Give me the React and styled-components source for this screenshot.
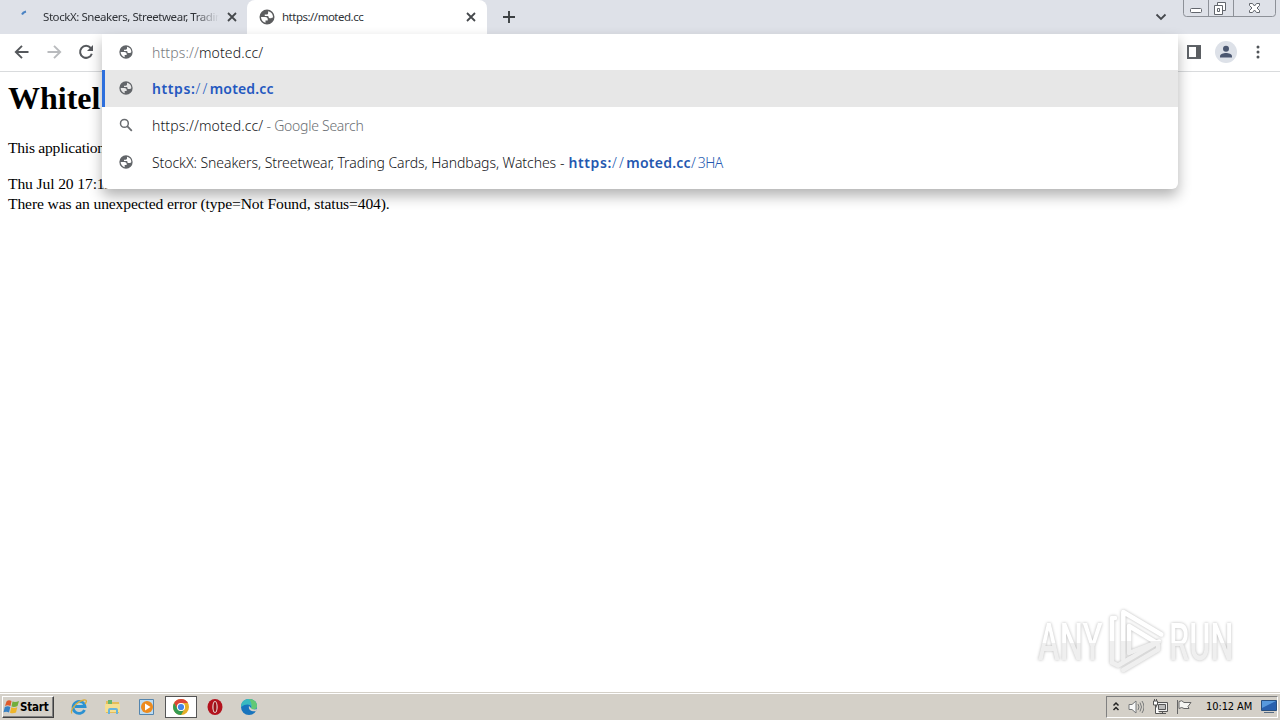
import styled, { createGlobalStyle } from "styled-components";

const suggestions = [
  {
    id: 1,
    icon: "globe",
    selected: true,
    parts: [
      { text: "https:", bold: true, space: 0.6, color: "#2458c0" },
      { text: "//", space: 2.3, color: "#2458c0" },
      { text: "moted.cc", bold: true, space: 0.15, color: "#2458c0" },
    ],
  },
  {
    id: 2,
    icon: "search",
    parts: [
      { text: "https://moted.cc/", space: 0.12 },
      { text: " - Google Search", space: -0.27, color: "#6b6f74" },
    ],
  },
  {
    id: 3,
    icon: "globe",
    parts: [
      { text: "StockX: Sneakers, Streetwear, Trading Cards, Handbags, Watches", space: -0.06 },
      { text: " - ", space: 0.2 },
      { text: "https:", bold: true, space: 0.6, color: "#2458b0" },
      { text: "//", space: 2.3, color: "#2458b0" },
      { text: "moted.cc", bold: true, space: 0.25, color: "#2458b0" },
      { text: "/", space: 2, color: "#2458b0" },
      { text: "3HA", space: -0.6, color: "#2458b0" },
    ],
  },
];

export default function App() {
  return (
    <>
      <GlobalStyle />
      <Screen>
        <TabStrip>
          <Tab $width={247}>
            <SpinnerIcon />
            <TabTitle $fade>StockX: Sneakers, Streetwear, Trading</TabTitle>
            <CloseIcon />
          </Tab>
          <Tab $width={240} $active>
            <GlobeIcon size={18} color="#5b5c5e" />
            <TabTitle $active>https://moted.cc</TabTitle>
            <CloseIcon />
          </Tab>
          <NewTab>
            <svg width="12" height="12" viewBox="0 0 12 12">
              <path d="M6 0v12M0 6h12" stroke="#3c4043" strokeWidth="1.9" />
            </svg>
          </NewTab>
          <TabSearch>
            <svg width="12" height="8" viewBox="0 0 12 8">
              <path d="M1.5 1.5 6 6l4.5-4.5" fill="none" stroke="#45484d" strokeWidth="1.8" />
            </svg>
          </TabSearch>
          <WindowButtons />
        </TabStrip>
        <Toolbar>
          <NavButtons>
            <ArrowIcon color="#55585c" />
            <ArrowIcon color="#b9bbbe" forward />
            <ReloadIcon />
          </NavButtons>
          <ToolbarActions>
            <svg width="14" height="14" viewBox="0 0 14 14">
              <path d="M1 1h12v12H1z" fill="none" stroke="#5f6368" strokeWidth="2" />
              <path d="M9 1h5v12H9z" fill="#5b5e62" />
            </svg>
            <Avatar>
              <svg width="14" height="14" viewBox="0 0 14 14" fill="#4b5770">
                <circle cx="7" cy="3.7" r="3" />
                <path d="M1 12.5v-1.3C1 9 4.5 8 7 8s6 1 6 3.2v1.3z" />
              </svg>
            </Avatar>
            <svg width="4" height="14" viewBox="0 0 4 14" fill="#505458">
              <circle cx="2" cy="2" r="1.5" />
              <circle cx="2" cy="7" r="1.5" />
              <circle cx="2" cy="12" r="1.5" />
            </svg>
          </ToolbarActions>
        </Toolbar>
        <Page>
          <PageHeading>Whitel</PageHeading>
          <PageText>This application</PageText>
          <PageLine>Thu Jul 20 17:12</PageLine>
          <PageLine>There was an unexpected error (type=Not Found, status=404).</PageLine>
        </Page>
        <Taskbar />
        <Omnibox />
        <Watermark />
      </Screen>
    </>
  );
}

function Omnibox() {
  return (
    <Popup>
      <InputRow>
        <IconSlot>
          <GlobeIcon size={16} />
        </IconSlot>
        <SuggestionText>
          <Part $color="#777a7e" $space={0.12}>https://</Part>
          <Part $space={0.12}>moted.cc/</Part>
        </SuggestionText>
      </InputRow>
      {suggestions.map((suggestion) => (
        <Suggestion key={suggestion.id} $selected={suggestion.selected}>
          <IconSlot>{suggestion.icon === "globe" ? <GlobeIcon size={16} /> : <SearchIcon />}</IconSlot>
          <SuggestionText>
            {suggestion.parts.map((part, index) => (
              <Part key={index} $bold={part.bold} $color={part.color} $space={part.space}>
                {part.text}
              </Part>
            ))}
          </SuggestionText>
        </Suggestion>
      ))}
    </Popup>
  );
}

function GlobeIcon({ size, color = "#626569" }) {
  return (
    <svg width={size} height={size} viewBox="0 0 24 24" fill={color} fillRule="evenodd">
      <path d="M12 2a10 10 0 1 0 0 20 10 10 0 0 0 0-20zM4 12h5.5c2.8 0 3.5 1.5 3.5 3v1.5h-3v3.200C6.600 19 4 15.800 4 12zM9 8.500h2.500c1.500 0 2-.8 2-2V4.200C17.500 4.900 20 8 20 12c-.6 1.200-1.600 1.500-2.600 1.500h-2c-.8 0-1.200-.8-1.200-1.600s-.7-1.400-1.400-1.400H9z" />
    </svg>
  );
}

function SearchIcon() {
  return (
    <svg width="14" height="14" viewBox="0 0 14 14" fill="none" stroke="#696c70">
      <circle cx="5.4" cy="5.4" r="3.9" strokeWidth="1.5" />
      <path d="m8.2 8.2 4.6 4.6" strokeWidth="1.8" />
    </svg>
  );
}

function SpinnerIcon() {
  return (
    <svg width="18" height="18" viewBox="0 0 18 18">
      <path d="M7 6.500Q8 4.200 11 3.500" fill="none" stroke="#4b83c3" strokeWidth="2" />
    </svg>
  );
}

function CloseIcon() {
  return (
    <svg width="10" height="10" viewBox="0 0 10 10">
      <path d="m1 1 8 8M9 1 1 9" stroke="#45484c" strokeWidth="1.8" />
    </svg>
  );
}

function ArrowIcon({ color, forward }) {
  return (
    <svg width="16" height="16" viewBox="0 0 16 16">
      <path
        d={forward ? "M1.5 8h12M8 1.8 14.2 8 8 14.2" : "M14.5 8h-12M8 1.8 1.8 8 8 14.2"}
        fill="none"
        stroke={color}
        strokeWidth="1.9"
      />
    </svg>
  );
}

function ReloadIcon() {
  return (
    <svg width="16" height="16" viewBox="0 0 16 16">
      <path d="M12.7 4A6 6 0 1 0 13.8 9.7" fill="none" stroke="#55585c" strokeWidth="2" />
      <path d="M15 1v6H9z" fill="#55585c" />
    </svg>
  );
}

function WindowButtons() {
  return (
    <ButtonsDrawing width="94" height="18" viewBox="0 0 94 18" fill="none">
      <path d="M.5 0v13.5q0 3 3 3h86q3 0 3-3V0M25.5 0v16M50.5 0v16" stroke="#8d9198" />
      <rect x="7.5" y="8.5" width="11" height="4" rx="1" fill="#fff" stroke="#62666d" />
      <path d="M34.5 2.5h8v8h-8z" fill="#fff" stroke="#62666d" />
      <path d="M31.5 5.5h8v9h-8z" fill="#fff" stroke="#62666d" />
      <path d="M34.5 8.5h2v3h-2z" stroke="#62666d" />
      <path d="M66.5 3.5h3l2 2.5 2-2.5h3v2L74 8l2.5 2.5v2h-3l-2-2.5-2 2.5h-3v-2L69 8l-2.500-2.500z" fill="#fff" stroke="#62666d" />
    </ButtonsDrawing>
  );
}

function Taskbar() {
  return (
    <Bar>
      <StartButton>
        <WindowsFlag />
        <span>Start</span>
      </StartButton>
      <Launchers>
        <Launcher>
          <svg width="18" height="18" viewBox="0 0 18 18" fill="none">
            <path d="M14.5 12A6 6 0 1 1 15 8.5H5" stroke="#2c91d1" strokeWidth="2.8" />
            <path d="M5.5 6.5q3-3 7 0" stroke="#8dd3f5" strokeWidth="1.2" />
            <path d="M2 15.5C-1 13 7 3 14 2c4-.5 2 3 1 4" stroke="#d9ad3c" strokeWidth="1.3" />
          </svg>
        </Launcher>
        <Launcher>
          <svg width="18" height="18" viewBox="0 0 18 18">
            <path d="M2 3h5l1 1h7v11H2z" fill="#e5bd58" />
            <path d="M4 2h4v4H4z" fill="#66b56c" />
            <path d="M1 6h15v8H1z" fill="#f5df91" />
            <path d="M4 16v-4q0-2 2-2h6q2 0 2 2v4h-2v-4H6v4z" fill="#67b4dc" />
          </svg>
        </Launcher>
        <Launcher>
          <svg width="18" height="18" viewBox="0 0 18 18">
            <path d="M1.5 1.5h14v15h-14z" fill="#bddcf2" stroke="#5485ae" />
            <circle cx="9" cy="9" r="6" fill="#ed8b1e" />
            <path d="m7 5.5 5.5 3.5L7 12.5z" fill="#fff" />
          </svg>
        </Launcher>
        <Launcher $open>
          <svg width="18" height="18" viewBox="0 0 18 18">
            <circle cx="9" cy="9" r="8" fill="#e5ae28" />
            <path d="M2.1 5A8 8 0 0 1 16 5H9a4 4 0 0 0-3.5 6z" fill="#dc4438" />
            <path d="M2.1 5A8 8 0 0 0 9 17l3.5-6a4 4 0 0 1-7 0z" fill="#359b52" />
            <circle cx="9" cy="9" r="4.1" fill="#fff" />
            <circle cx="9" cy="9" r="3.1" fill="#4285e8" />
          </svg>
        </Launcher>
        <Launcher>
          <svg width="18" height="18" viewBox="0 0 18 18">
            <ellipse cx="9" cy="9" rx="7.5" ry="8" fill="#b3121d" />
            <ellipse cx="9" cy="9" rx="2.7" ry="6" fill="#e6d4d0" />
            <ellipse cx="9" cy="9" rx="1.5" ry="5" fill="#9a1218" />
          </svg>
        </Launcher>
        <Launcher>
          <svg width="18" height="18" viewBox="0 0 18 18">
            <circle cx="9" cy="9" r="8" fill="#1874bd" />
            <path d="M1 9C1 3 5 1 9 1c5 0 8 3 8 7 0 3-3 4-6 3 2-4-4-7-10-2z" fill="#39b9c0" />
            <path d="M9 1c5 0 8 3 8 7 0 3-3 4-6 3 1-3 1-6-2-10z" fill="#62c875" />
            <path d="M9 8c-1 4 3 6 7 5l1-2c-3 1-6 0-6-1z" fill="#d4d0c8" />
          </svg>
        </Launcher>
      </Launchers>
      <Tray>
        <svg width="8" height="12" viewBox="0 0 8 12" fill="none" stroke="#222" strokeWidth="1.5">
          <path d="M1.5 4.5 4 2l2.500 2.500M1.500 9 4 6.500 6.500 9" />
        </svg>
        <svg width="16" height="16" viewBox="0 0 16 16" fill="none" stroke="#77797a">
          <path d="M1 5.5h3L8 2v12l-4-3.5H1z" fill="#f8f8f8" />
          <path d="M10 5q2 3 0 6M12 3.5q3 4.5 0 9M14 2q4 6 0 12" />
        </svg>
        <svg width="16" height="16" viewBox="0 0 16 16" fill="none" stroke="#555">
          <path d="M4.5 3.5h11v9h-11z" fill="#eee" />
          <path d="M6.5 5.5h7v5h-7z" fill="#bbb" />
          <path d="M7 14.5h7M10.5 12.5v2" />
          <path d="M1.5 2v4h4V2zM3.500 6v8.500h4" fill="#fff" />
          <path d="M2.5 0v2M4.5 0v2" />
        </svg>
        <svg width="16" height="16" viewBox="0 0 16 16" fill="#f5f5f2" stroke="#666">
          <path d="M1.5 1v14M3 2.5q3-2 5 1h7l-3 4 1 2H8q-2-2-5 0z" />
        </svg>
        <Clock>10:12 AM</Clock>
        <svg width="16" height="14" viewBox="0 0 16 14">
          <path d="M.5.5h15v10H.5z" fill="#2860ae" stroke="#285080" />
          <path d="M1 1h14L1 8z" fill="#5799dd" />
          <path d="M3 12h10v1H3z" fill="#566b83" />
        </svg>
      </Tray>
    </Bar>
  );
}

function WindowsFlag() {
  return (
    <svg width="17" height="16" viewBox="0 0 16 16">
      <path d="M3 2.500q2-2 5-.5L7 7Q4 5.500 1.500 7z" fill="#df5a2b" />
      <path d="M9 2.500q3 1 6.500-.5L14 7q-3 1.500-6 .5z" fill="#72ae3b" />
      <path d="M1.300 8q3-1.500 5.500 0L5.500 13.500Q3 12 0 13.300z" fill="#3781c4" />
      <path d="M7.800 8.300q3 1.500 6 0l-1.300 5.200q-3 1.500-6 .3z" fill="#eeb52a" />
    </svg>
  );
}

function Watermark() {
  return (
    <Mark>
      <MarkWord $scale={0.63}>ANY</MarkWord>
      <svg width="60" height="68" viewBox="0 0 60 68" fill="none" strokeLinejoin="round" strokeLinecap="round" strokeWidth="4.5">
        <defs>
          <linearGradient id="glass" gradientUnits="userSpaceOnUse" x1="0" y1="0" x2="0" y2="68">
            <stop offset=".52" stopColor="#fff" />
            <stop offset=".52" stopColor="#efefef" />
          </linearGradient>
        </defs>
        <g stroke="url(#glass)">
          <path d="M9 12H6v44.5l6 3 41-24" />
          <path d="M17.3 64 52 43.5v-4" />
          <path d="M17.3 54V6l38 22.5" />
          <path d="M23 47V20l27 16.5z" />
        </g>
      </svg>
      <MarkWord $scale={0.62}>RUN</MarkWord>
    </Mark>
  );
}

const GlobalStyle = createGlobalStyle`
  body {
    margin: 0;
    overflow: hidden;
  }

  * {
    box-sizing: border-box;
  }

  svg {
    display: block;
    flex-shrink: 0;
  }
`;

const Screen = styled.div`
  position: relative;
  width: 1280px;
  height: 720px;
  display: flex;
  flex-direction: column;
  overflow: hidden;
  background: #fff;
  font-family: "Noto Sans", sans-serif;
`;

const TabStrip = styled.header`
  display: flex;
  height: 34px;
  background: #dee1e8;
`;

const Tab = styled.div`
  display: flex;
  align-items: center;
  width: ${({ $width }) => $width}px;
  padding: 0 ${({ $active }) => ($active ? 11 : 10)}px 0 ${({ $active }) => ($active ? 11 : 15)}px;
  border-radius: 8px 8px 0 0;
  background: ${({ $active }) => ($active ? "#fff" : "transparent")};
`;

const TabTitle = styled.span`
  flex: 1;
  overflow: hidden;
  margin: -1px ${({ $fade }) => ($fade ? 8 : 10)}px 0 ${({ $active }) => ($active ? 6 : 10)}px;
  color: #303338;
  font-size: 11.5px;
  letter-spacing: ${({ $active }) => ($active ? -0.5 : -0.43)}px;
  white-space: nowrap;
  mask-image: ${({ $fade }) => ($fade ? "linear-gradient(to right, #000 86%, transparent)" : "none")};
`;

const NewTab = styled.div`
  display: flex;
  align-items: center;
  padding-left: 16px;
`;

const TabSearch = styled.div`
  display: flex;
  align-items: center;
  margin-left: auto;
  margin-right: 16px;
`;

const ButtonsDrawing = styled.svg`
  margin-right: 3px;
`;

const Toolbar = styled.div`
  display: flex;
  justify-content: space-between;
  height: 38px;
  padding: 0 20px 2px 14px;
  border-bottom: 1px solid #d9dbdd;
`;

const NavButtons = styled.div`
  display: flex;
  align-items: center;
  gap: 16px;
`;

const ToolbarActions = styled.div`
  display: flex;
  align-items: center;
  gap: 19px;

  > :first-child {
    margin-right: -5px;
  }
`;

const Avatar = styled.div`
  display: grid;
  place-items: center;
  width: 22px;
  height: 22px;
  border-radius: 50%;
  background: #dde1e8;
`;

const Page = styled.main`
  flex: 1;
  padding: 8px;
  font-family: "Liberation Serif", serif;
  font-size: 15.6px;
  letter-spacing: -0.12px;
  color: #000;
`;

const PageHeading = styled.h1`
  margin: 0 0 21px;
  font-size: 32px;
  letter-spacing: 0;
  line-height: 37px;
`;

const PageText = styled.p`
  margin: 0 0 16px;
  letter-spacing: -0.25px;
  line-height: 20px;
`;

const PageLine = styled.div`
  line-height: 20px;
`;

const Popup = styled.section`
  position: absolute;
  left: 102px;
  top: 34px;
  width: 1076px;
  height: 155px;
  border-radius: 0 0 6px 6px;
  background: #fff;
  box-shadow: 0 7px 14px rgba(0, 0, 0, 0.3);
`;

const InputRow = styled.div`
  display: flex;
  align-items: center;
  height: 36px;
  padding-left: 3px;
`;

const Suggestion = styled.div`
  display: flex;
  align-items: center;
  height: 37px;
  border-left: 3px solid ${({ $selected }) => ($selected ? "#2d6fdd" : "transparent")};
  background: ${({ $selected }) => ($selected ? "#e7e7e7" : "transparent")};
`;

const IconSlot = styled.div`
  display: flex;
  justify-content: center;
  width: 42px;
  margin-bottom: 1px;
`;

const SuggestionText = styled.div`
  margin-left: 5px;
  font-size: 14px;
  white-space: pre;
`;

const Part = styled.span`
  color: ${({ $color }) => $color || "#141518"};
  font-weight: ${({ $bold }) => ($bold ? 600 : 300)};
  letter-spacing: ${({ $space }) => $space}px;
`;

const Mark = styled.div`
  position: absolute;
  left: 1038px;
  top: 606px;
  display: flex;
  align-items: center;
  height: 68px;
  filter: drop-shadow(0 0 1.5px rgba(0, 0, 0, 0.28));
`;

const MarkWord = styled.span`
  margin: 5px -32px 0 0;
  font: 500 52px/68px Roboto, sans-serif;
  color: transparent;
  background: linear-gradient(#fff 50%, #efefef 50%);
  background-clip: text;
  transform: scaleX(${({ $scale }) => $scale});
  transform-origin: left;

  & + svg {
    margin-left: -2px;
    margin-right: 3px;
  }
`;

const Bar = styled.footer`
  display: flex;
  align-items: center;
  height: 28px;
  padding: 0 2px;
  border-top: 1px solid #d4d0c8;
  background: #d4d0c8;
  box-shadow: inset 0 1px #fff;
`;

const StartButton = styled.div`
  display: flex;
  align-items: center;
  width: 52px;
  height: 22px;
  border: 1px solid;
  border-color: #fff #404040 #404040 #fff;
  box-shadow: inset -1px -1px #808080;
  color: #000;
  font: bold 11.5px "DejaVu Sans Condensed", sans-serif;
  letter-spacing: -0.2px;
`;

const Launchers = styled.div`
  display: flex;
  gap: 2px;
  margin-left: 9px;
`;

const Launcher = styled.div`
  display: grid;
  place-items: center;
  width: 32px;
  height: 22px;
  border: 1px solid ${({ $open }) => ($open ? "#555" : "transparent")};
  background: ${({ $open }) => ($open ? "#fff" : "transparent")};
`;

const Tray = styled.div`
  display: flex;
  align-items: center;
  gap: 8px;
  width: 172px;
  height: 22px;
  margin-left: auto;
  padding-left: 5px;
  border: 1px solid;
  border-color: #808080 #fff #fff #808080;
`;

const Clock = styled.span`
  width: 47px;
  margin-left: 6px;
  color: #000;
  font: 11px "DejaVu Sans Condensed", sans-serif;
  letter-spacing: -0.1px;
  white-space: nowrap;
`;
